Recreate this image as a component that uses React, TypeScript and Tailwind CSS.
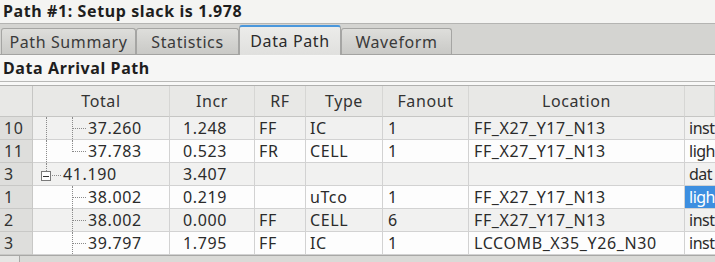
import React from "react";

type Row = {
  num: string;
  total: string;
  incr: string;
  rf: string;
  type: string;
  fanout: string;
  location: string;
  last: string;
  tree: "mid" | "end" | "parent" | "child";
  selected?: boolean;
};

// last column is cut off by the window edge in the source view
const rows: Row[] = [
  { num: "10", total: "37.260", incr: "1.248", rf: "FF", type: "IC", fanout: "1", location: "FF_X27_Y17_N13", last: "inst", tree: "mid" },
  { num: "11", total: "37.783", incr: "0.523", rf: "FR", type: "CELL", fanout: "1", location: "FF_X27_Y17_N13", last: "ligh", tree: "end" },
  { num: "3", total: "41.190", incr: "3.407", rf: "", type: "", fanout: "", location: "", last: "dat", tree: "parent" },
  { num: "1", total: "38.002", incr: "0.219", rf: "", type: "uTco", fanout: "1", location: "FF_X27_Y17_N13", last: "ligh", tree: "child", selected: true },
  { num: "2", total: "38.002", incr: "0.000", rf: "FF", type: "CELL", fanout: "6", location: "FF_X27_Y17_N13", last: "inst", tree: "child" },
  { num: "3", total: "39.797", incr: "1.795", rf: "FF", type: "IC", fanout: "1", location: "LCCOMB_X35_Y26_N30", last: "inst", tree: "child" },
];

const cols = "grid grid-cols-[33px_137px_85px_51px_77px_86px_216px_30px]";

function TreeCell({ row }: { row: Row }) {
  const dot = "border-dotted border-[#8a8a8a]";
  return (
    <div className="relative h-full overflow-hidden border-r border-b border-[#d2d2d2]">
      {row.tree !== "child" && (
        <div
          className={`absolute left-[13px] top-0 border-l ${dot} ${row.tree === "parent" ? "h-[8px]" : "h-full"}`}
        />
      )}
      {row.tree === "parent" ? (
        <>
          <div className="absolute left-[8px] top-[8px] flex h-[10px] w-[10px] items-center justify-center border border-[#7a7a7a] bg-white">
            <div className="h-px w-[6px] bg-[#333]" />
          </div>
          <div className={`absolute left-[19px] top-[12px] w-[9px] border-t ${dot}`} />
          <span className="absolute left-[30px] top-0 leading-[22px]">{row.total}</span>
        </>
      ) : (
        <>
          <div
            className={`absolute left-[39px] top-0 border-l ${dot} ${row.tree === "end" ? "h-[12px]" : "h-full"}`}
          />
          <div className={`absolute left-[40px] top-[11px] w-[13px] border-t ${dot}`} />
          <span className="absolute left-[55px] top-0 leading-[22px]">{row.total}</span>
        </>
      )}
    </div>
  );
}

function Cell({ children, className = "" }: { children?: React.ReactNode; className?: string }) {
  return (
    <div className={`h-full overflow-hidden whitespace-nowrap border-r border-b border-[#d2d2d2] pl-[4px] leading-[22px] ${className}`}>
      {children}
    </div>
  );
}

const tabs = ["Path Summary", "Statistics", "Data Path", "Waveform"];
const tabWidths = ["w-[135px]", "w-[103px]", "w-[102px]", "w-[111px]"];

export default function App() {
  return (
    <div
      className="flex h-[262px] w-[715px] flex-col overflow-hidden bg-[#f4f4f2] text-[16px] tracking-[0.6px] text-[#2b2b2b]"
      style={{ fontFamily: '"Noto Sans", "Open Sans", sans-serif' }}
    >
      <div className="h-[23px] pl-[3px] text-[16px] font-bold leading-[23px] text-[#1e1e1e]">
        Path #1: Setup slack is 1.978
      </div>
      <div className="h-px bg-[#b4b4b2]" />
      <div className="flex h-[31px] items-end border-b border-[#a3a3a1] bg-[#d4d4d1] pl-px">
        {tabs.map((t, i) =>
          t === "Data Path" ? (
            <div
              key={t}
              className={`${tabWidths[i]} -mb-px flex h-[30px] items-center justify-center rounded-t-[3px] border-x border-t-2 border-x-[#a5a5a3] border-t-[#4a97dc] bg-gradient-to-b from-[#ececea] to-[#e0e0de] text-[#2b2b2b]`}
            >
              {t}
            </div>
          ) : (
            <div
              key={t}
              className={`${tabWidths[i]} flex h-[26px] items-center justify-center rounded-t-[3px] border-x border-t border-[#a5a5a3] bg-gradient-to-b from-[#dededb] to-[#c9c9c6] text-[#3a3a3a]`}
            >
              {t}
            </div>
          ),
        )}
      </div>
      <div className="h-px bg-[#f8f8f7]" />
      <div className="h-[25px] bg-[#f6f6f5] pl-[3px] font-bold leading-[25px] text-[#1e1e1e]">Data Arrival Path</div>
      <div className="h-px bg-[#b8b8b6]" />
      <div className="h-[3px] bg-[#f8f8f7]" />
      <div className="flex-1 border-t border-[#b0b0ae] bg-white">
        <div className={`${cols} h-[31px] bg-[#e8e8e6] text-[#333]`}>
          {["", "Total", "Incr", "RF", "Type", "Fanout", "Location", ""].map((h, i) => (
            <div
              key={i}
              className={`flex h-full items-center justify-center border-b border-[#c6c6c4] ${i === 0 ? "border-r border-r-[#c6c6c4]" : "border-r border-r-[#d6d6d4]"}`}
            >
              {h}
            </div>
          ))}
        </div>
        {rows.map((r, i) => (
          <div key={i} className={`${cols} h-[23px] ${i % 2 === 0 ? "bg-[#f1f1f0]" : "bg-[#fdfdfd]"}`}>
            <div className="h-full border-r border-b border-[#c8c8c6] bg-[#dededc] pl-[4px] leading-[22px] text-[#333]">
              {r.num}
            </div>
            <TreeCell row={r} />
            <Cell className="pl-[13px]">{r.incr}</Cell>
            <Cell className="pl-[2px]">{r.rf}</Cell>
            <Cell>{r.type}</Cell>
            <Cell className="pl-[5px]">{r.fanout}</Cell>
            <Cell className="pl-[5px]">{r.location}</Cell>
            <Cell className={`border-r-0 pl-[2px] tracking-[-0.5px] ${r.selected ? "bg-[#3d8fe0] text-white" : ""}`}>
              {r.last}
            </Cell>
          </div>
        ))}
        <div className="flex h-[7px] border-t border-[#a8a8a6] bg-[#dadad7]">
          <div className="h-full w-[20px] border-r border-[#a8a8a6] bg-[#e6e6e4]" />
        </div>
      </div>
    </div>
  );
}
